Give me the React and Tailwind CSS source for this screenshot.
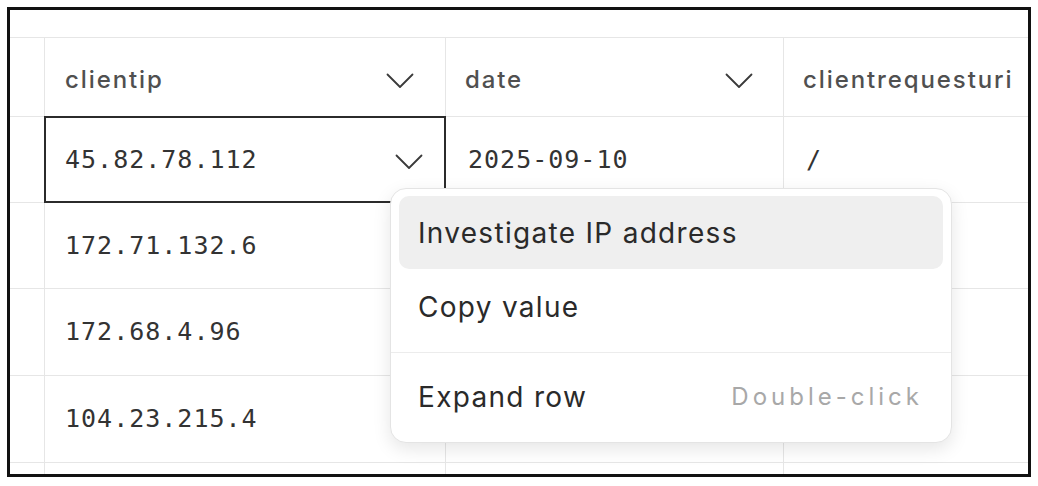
import React from 'react';

const mono = { fontFamily: '"DejaVu Sans Mono", monospace' };

function Chevron({ className = '' }) {
  return (
    <svg width="28" height="16" viewBox="0 0 28 16" className={className} fill="none">
      <polyline points="1.5,1.5 14,14 26.5,1.5" stroke="#3a3a3a" strokeWidth="1.8" strokeLinecap="round" strokeLinejoin="round" />
    </svg>
  );
}

const rows = [
  { ip: '45.82.78.112', date: '2025-09-10', uri: '/', h: 'h-[86px]' },
  { ip: '172.71.132.6', date: '', uri: '', h: 'h-[86px]' },
  { ip: '172.68.4.96', date: '', uri: '', h: 'h-[87px]' },
  { ip: '104.23.215.4', date: '', uri: '', h: 'h-[87px]' },
];

export default function App() {
  return (
    <div className="w-[1038px] h-[486px] bg-white pt-[7px] pl-[7px] pr-[7px] pb-[9px] font-['Inter',sans-serif]">
      <div className="relative h-full border-[3px] border-[#111] overflow-hidden bg-white">
        <div className="h-[28px] border-b border-[#e6e6e6]" />

        <div className="grid grid-cols-[35px_401px_338px_1fr]">
          {/* header */}
          <div className="h-[79px] border-r border-b border-[#e6e6e6]" />
          <div className="h-[79px] border-r border-b border-[#e6e6e6] flex items-center justify-between pl-[20px] pr-[31px]">
            <span className="mt-[5px] text-[24px] tracking-[1.9px] text-[#505050] font-medium">clientip</span>
            <Chevron className="mt-[8px]" />
          </div>
          <div className="h-[79px] border-r border-b border-[#e6e6e6] flex items-center justify-between pl-[19px] pr-[30px]">
            <span className="mt-[5px] text-[24px] tracking-[1.9px] text-[#505050] font-medium">date</span>
            <Chevron className="mt-[8px]" />
          </div>
          <div className="h-[79px] border-b border-[#e6e6e6] flex items-center pl-[19px]">
            <span className="mt-[5px] text-[24px] tracking-[1.9px] text-[#505050] font-medium whitespace-nowrap">clientrequesturi</span>
          </div>

          {/* rows */}
          {rows.map((r, i) => (
            <React.Fragment key={i}>
              <div className={`${r.h} border-r border-b border-[#e6e6e6]`} />
              <div className={`relative ${r.h} border-r border-b border-[#e6e6e6] flex items-center justify-between pl-[20px] pr-[22px]`}>
                <span style={mono} className="text-[25px] tracking-[1px] text-[#333]">{r.ip}</span>
                {i === 0 && (
                  <>
                    <Chevron className="mt-[4px]" />
                    <div className="absolute -left-px -top-px -right-px -bottom-px border-2 border-[#2b2b2b]" />
                  </>
                )}
              </div>
              <div className={`${r.h} border-r border-b border-[#e6e6e6] flex items-center pl-[22px]`}>
                <span style={mono} className="text-[25px] tracking-[1px] text-[#333]">{r.date}</span>
              </div>
              <div className={`${r.h} border-b border-[#e6e6e6] flex items-center pl-[22px]`}>
                <span style={mono} className="text-[25px] text-[#333]">{r.uri}</span>
              </div>
            </React.Fragment>
          ))}
          <div className="h-[40px] border-r border-[#e6e6e6]" />
          <div className="h-[40px] border-r border-[#e6e6e6]" />
          <div className="h-[40px] border-r border-[#e6e6e6]" />
          <div className="h-[40px]" />
        </div>

        {/* context menu */}
        <div className="absolute left-[380px] top-[178px] w-[562px] bg-white border border-[#e4e4e4] rounded-[16px] shadow-[0_6px_18px_rgba(0,0,0,0.10)] text-[#2a2a2a]">
          <div className="px-[8px] pt-[7px] pb-[8px]">
            <div className="h-[73px] rounded-[10px] bg-[#efefef] flex items-center pl-[19px] text-[28px] tracking-[1.3px]">
              Investigate IP address
            </div>
            <div className="h-[75px] flex items-center pl-[19px] text-[28px] tracking-[1.3px]">
              Copy value
            </div>
          </div>
          <div className="h-px bg-[#ececec]" />
          <div className="px-[8px] pt-[8px] pb-[9px]">
            <div className="h-[72px] flex items-center justify-between pl-[19px] pr-[20px]">
              <span className="text-[28px] tracking-[1.3px]">Expand row</span>
              <span className="text-[24px] tracking-[4px] text-[#a8a8a8]">Double-click</span>
            </div>
          </div>
        </div>
      </div>
    </div>
  );
}
